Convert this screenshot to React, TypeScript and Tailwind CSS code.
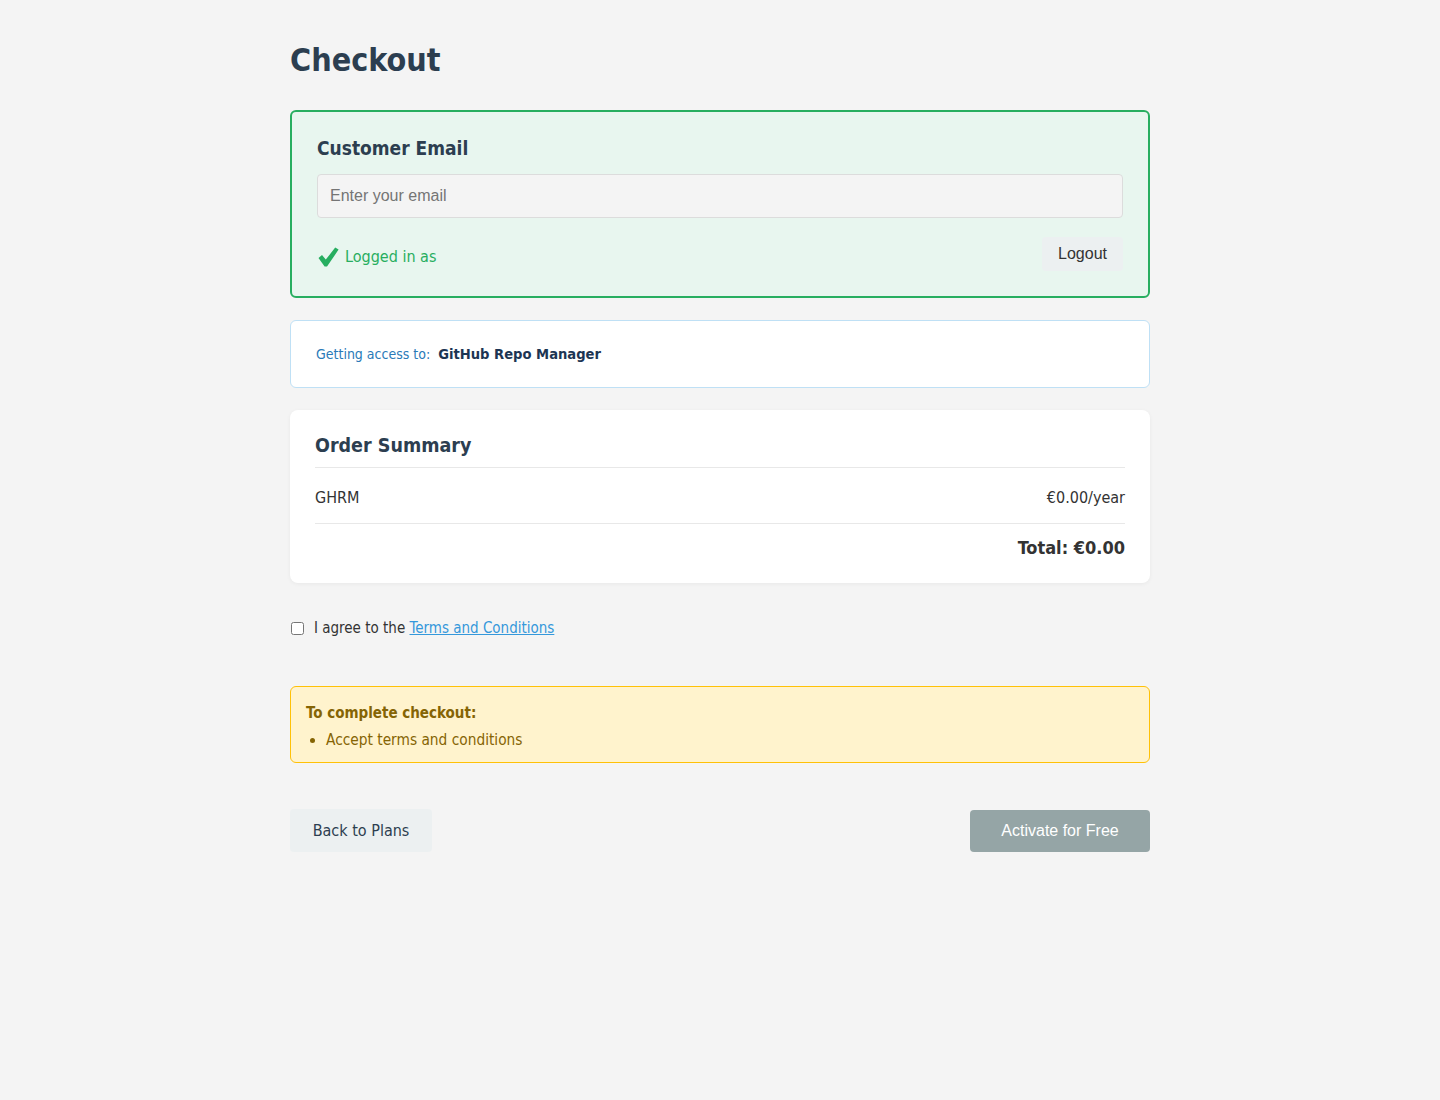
import React from "react";

export default function App() {
  const font = { fontFamily: "'DejaVu Sans Condensed', 'DejaVu Sans', sans-serif" };
  return (
    <div className="min-h-[1100px] bg-[#f4f4f4]" style={font}>
      <div className="mx-auto w-[860px] pt-[37px]">
        <h1 className="text-[32px] font-bold leading-[46px] text-[#2c3e50]">Checkout</h1>

        <div className="mt-[27px] rounded-[6px] border-2 border-[#27ae60] bg-[#e8f6ef] px-[25px] pt-[24px] pb-[25px]">
          <h3 className="text-[19px] font-bold leading-[24px] text-[#2c3e50]">Customer Email</h3>
          <input
            type="email"
            placeholder="Enter your email"
            className="mt-[14px] block h-[44px] w-full rounded-[4px] border border-[#dcdcdc] bg-[#f4f4f4] px-[12px] text-[16px] text-[#333] placeholder:text-[#757575] outline-none"
            style={{ fontFamily: "'Liberation Sans', Arial, sans-serif" }}
          />
          <div className="mt-[19px] flex items-center justify-between">
            <div className="flex items-center pt-[6px] text-[16px] leading-[20px] text-[#27ae60]">
              <span className="ml-[1px] mr-[6px] inline-flex h-[20px] w-[21px] items-center justify-center">
                <svg width="21" height="20" viewBox="0 0 21 20">
                  <path d="M0.5 11 L4 8 L7.8 12.6 L17.2 0.6 L20.6 2.6 L9 19.6 L6.6 19.6 Z" fill="#27ae60" />
                </svg>
              </span>
              <span>Logged in as</span>
            </div>
            <button
              className="h-[34px] rounded-[4px] bg-[#ecf0f1] px-[16px] text-[16px] text-[#333]"
              style={{ fontFamily: "'Liberation Sans', Arial, sans-serif" }}
            >
              Logout
            </button>
          </div>
        </div>

        <div className="mt-[22px] flex items-center rounded-[6px] border border-[#bfe0f5] bg-white px-[25px] py-[23px] leading-[20px]">
          <span className="text-[14px] text-[#2a7ab8]">Getting access to:</span>
          <span className="ml-[8px] text-[14.6px] font-bold text-[#1c3553]">GitHub Repo Manager</span>
        </div>

        <div className="mt-[22px] rounded-[8px] bg-white px-[25px] pt-[24px] pb-[23px] shadow-[0_1px_4px_rgba(0,0,0,0.05)]">
          <div className="border-b border-[#e8e8e8] pb-[9px]">
            <h3 className="text-[19.5px] font-bold leading-[24px] text-[#2c3e50]">Order Summary</h3>
          </div>
          <div className="flex justify-between border-b border-[#e8e8e8] pt-[20px] pb-[15px] text-[16px] leading-[20px] text-[#333]">
            <span>GHRM</span>
            <span>€0.00/year</span>
          </div>
          <div className="pt-[12px] text-right text-[18px] font-bold leading-[24px] text-[#333]">Total: €0.00</div>
        </div>

        <div className="mt-[35px] flex items-center text-[15px] leading-[20px] text-[#333]">
          <input type="checkbox" className="ml-[1px] mr-[10px] h-[13px] w-[13px]" />
          <span>
            I agree to the{" "}
            <a href="#" className="text-[#3498db] underline">
              Terms and Conditions
            </a>
          </span>
        </div>

        <div className="mt-[48px] rounded-[6px] border border-[#ffc107] bg-[#fff3cd] px-[15px] pt-[16px] pb-[12px] text-[#856404]">
          <div className="text-[15px] font-bold leading-[20px]">To complete checkout:</div>
          <ul className="mt-[7px] list-disc pl-[20px] text-[15.3px] leading-[20px]">
            <li>Accept terms and conditions</li>
          </ul>
        </div>

        <div className="mt-[46px] flex items-center justify-between">
          <button className="h-[43px] w-[142px] rounded-[4px] bg-[#ecf0f1] text-[16px] text-[#2c3e50]" style={font}>
            Back to Plans
          </button>
          <button
            className="h-[42px] w-[180px] rounded-[4px] bg-[#95a5a6] text-[16px] text-white"
            style={{ fontFamily: "'Liberation Sans', Arial, sans-serif" }}
          >
            Activate for Free
          </button>
        </div>
      </div>
    </div>
  );
}
